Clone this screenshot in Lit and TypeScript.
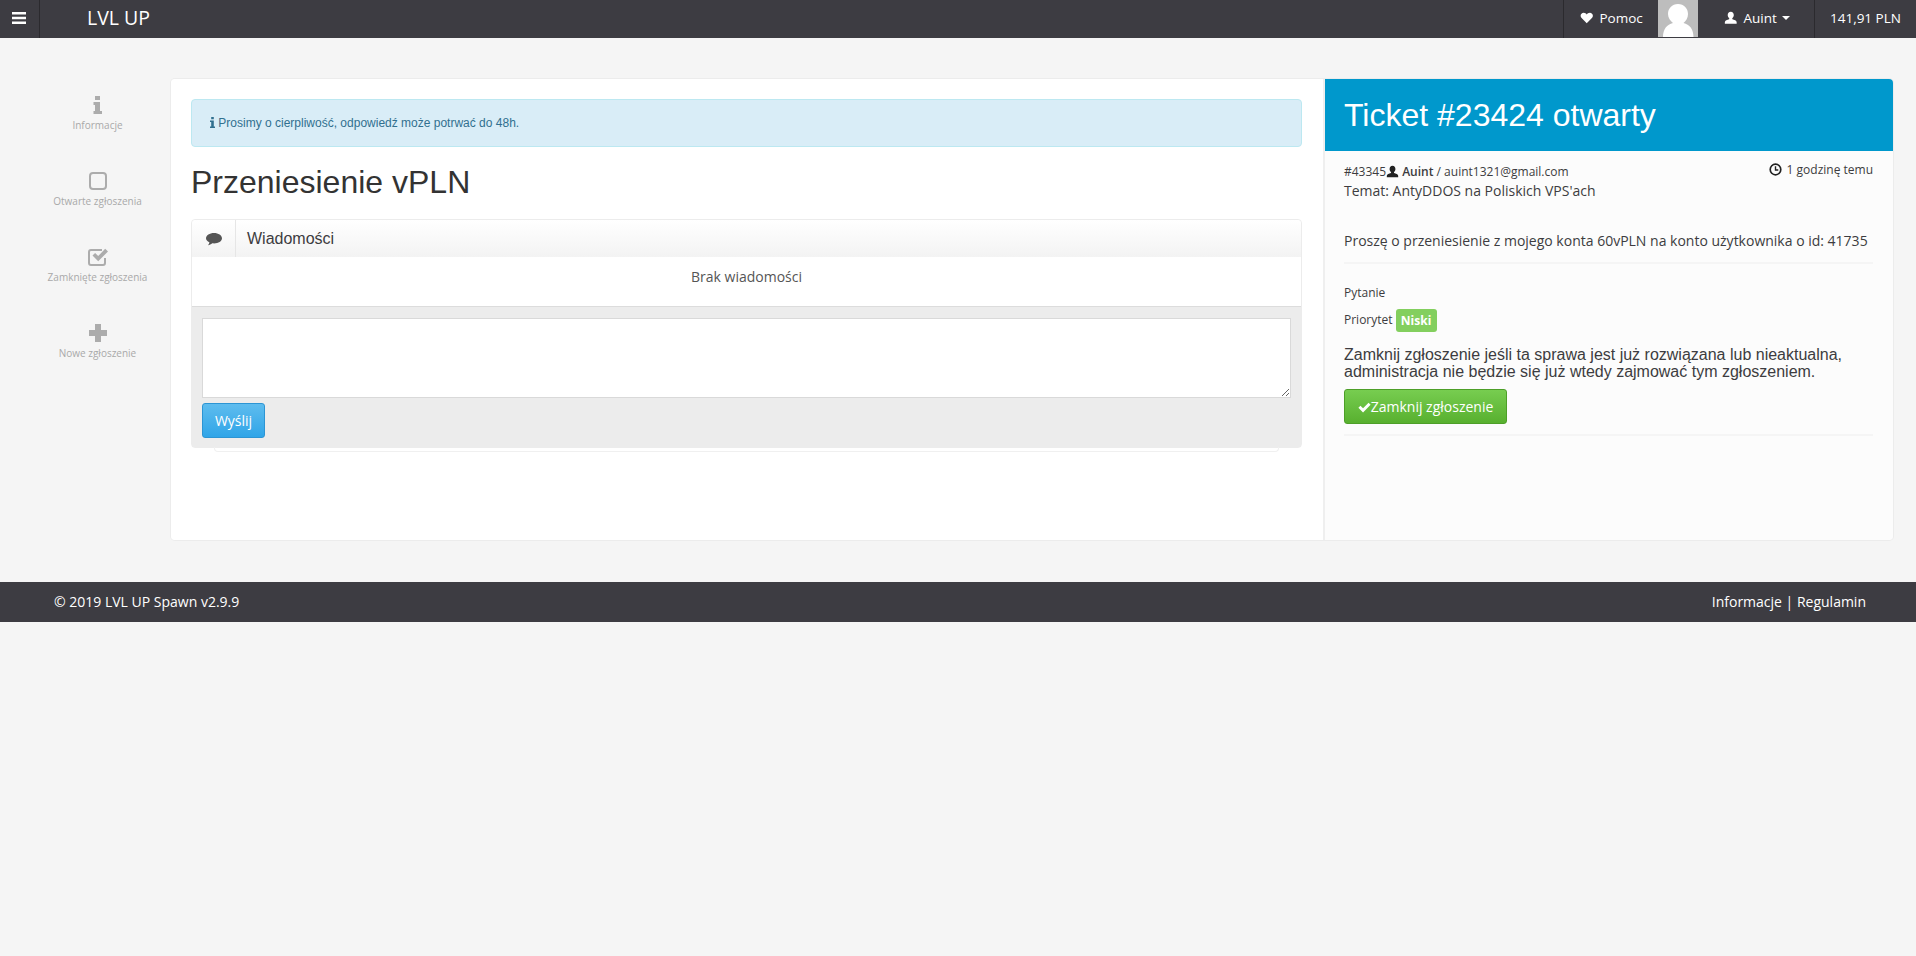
import { LitElement, html, css } from "lit";
import { customElement } from "lit/decorators.js";

const user = html`<svg viewBox="0 0 16 16" class="i"><path fill="currentColor" d="M8 1c-2.300 0-3.600 1.700-3.600 3.800 0 1.500.7 3 1.700 3.800.3.300.3.900-.1 1.200C4 10.500 1 11 1 13.200V15h14v-1.800c0-2.200-3-2.700-5-3.400-.4-.3-.4-.9-.1-1.200 1-.8 1.700-2.300 1.700-3.800C11.600 2.700 10.300 1 8 1z"/></svg>`;
const heart = html`<svg viewBox="0 0 16 16" class="i"><path fill="currentColor" d="M8 14.500 1.900 8.400C-.6 5.600 1.300 2 4.400 2 6 2 7.300 3 8 4.100 8.700 3 10 2 11.600 2c3.100 0 5 3.600 2.500 6.400z"/></svg>`;
const check = html`<svg viewBox="0 0 16 16" class="i"><path fill="currentColor" d="M.5 8.300 3 5.800l3.200 3.200 6.800-6.800L15.500 4.700 6.200 14z"/></svg>`;

@customElement("app-root")
export class AppRoot extends LitElement {
  static styles = css`
    :host { display: block; min-height: 956px; background: #f5f5f5; font-family: "Open Sans", sans-serif; color: #3d3c40; font-size: 13px; }
    * { box-sizing: border-box; }
    .i { width: 1em; height: 1em; display: inline-block; vertical-align: -0.12em; }
    .nav { height: 38px; background: #3d3c42; display: flex; color: #fff; }
    .burger { width: 40px; height: 38px; border-right: 1px solid #2b2a2e; display: flex; align-items: center; justify-content: center; padding-bottom: 3px; padding-right: 1px; }
    .burger svg { width: 14px; height: 12px; }
    .brand { margin-left: 47px; font-size: 19.500px; line-height: 36px; color: #fff; }
    .spacer { flex: 1; }
    .navitem { height: 38px; display: flex; align-items: center; font-size: 13.500px; gap: 6px; padding-bottom: 3px; }
    .help { width: 95px; border-left: 1px solid #2b2a2e; padding-left: 16px; }
    .avatar { width: 40px; height: 37px; background: #bdbdbd; display: block; }
    .account { width: 117px; border-right: 1px solid #2b2a2e; padding-left: 26px; }
    .caret { width: 0; height: 0; border-left: 4px solid transparent; border-right: 4px solid transparent; border-top: 4px solid #fff; margin-left: -1px; }
    .money { width: 101px; padding-left: 15px; font-size: 13.500px; }

    .main { display: flex; padding: 41px 23px 42px 0; }
    .side { width: 171px; flex: none; display: flex; flex-direction: column; padding: 17px 0 0 24px; }
    .side a { height: 76px; display: flex; flex-direction: column; align-items: center; color: #a9a9a9; font-size: 10px; }
    .side svg { width: 22px; height: 18px; margin-bottom: 4px; color: #acacac; }
    .side span { line-height: 14px; }

    .panel { flex: 1; display: flex; height: 461px; border-radius: 4px; box-shadow: 0 0 0 1px #ececec; }
    .left { width: 1154px; background: #fff; border-right: 2px solid #efefef; padding: 20px 21px 0 20px; border-radius: 4px 0 0 4px; }
    .alert { height: 48px; background: #d9edf7; border: 1px solid #bce8f1; border-radius: 4px; color: #31708f; font: 12px/46px "Liberation Sans", sans-serif; padding-left: 18px; }
    .alert svg { width: 5px; height: 11px; vertical-align: -1px; }
    h1 { margin: 15px 0 17px; font: 500 32px/40px "Liberation Sans", sans-serif; color: #333; }
    .widget { border: 1px solid #ececec; border-radius: 4px; position: relative; }
    .widget::after { content: ""; position: absolute; left: 22px; right: 22px; bottom: -5px; height: 4px; border: 1px solid #f0f0f0; border-top: 0; border-radius: 0 0 4px 4px; }
    .whead { height: 37px; display: flex; background: linear-gradient(#fff, #f3f3f3); border-radius: 4px 4px 0 0; }
    .wicon { width: 44px; border-right: 1px solid #e6e6e6; display: flex; align-items: center; justify-content: center; }
    .wicon svg { width: 16px; height: 14px; color: #555; }
    .wtitle { padding-left: 11px; font: 16px/37px "Liberation Sans", sans-serif; color: #3d3c40; }
    .empty { height: 50px; background: #fff; border-bottom: 1px solid #dcdcdc; text-align: center; line-height: 40px; font-size: 14px; color: #555; }
    .reply { background: #ececec; padding: 11px 10px 10px; height: 140px; }
    textarea { display: block; width: 100%; height: 80px; border: 1px solid #d9d9d9; background: #fff; margin: 0 0 5px; }
    .send { display: block; height: 35px; width: 63px; background: linear-gradient(#5ebcee, #30a5e8); border: 1px solid #2c95d4; border-radius: 3px; color: #fff; font: 14px "Open Sans", sans-serif; padding: 0; }

    .right { flex: 1; background: #fcfcfc; border-radius: 0 4px 4px 0; overflow: hidden; }
    .rhead { height: 72px; background: #0098cc; color: #fff; padding-left: 19px; font: 32px/72px "Liberation Sans", sans-serif; }
    .rbody { padding: 11px 20px 11px 19px; }
    .meta { display: flex; justify-content: space-between; font-size: 12px; line-height: 20px; height: 20px; }
    .meta svg { width: 13px; height: 13px; color: #222; vertical-align: -2px; }
    .strong { font-weight: 600; }
    .time { margin-top: -2px; }
    .time svg { margin-right: 5px; }
    .subject { font-size: 14px; line-height: 18px; }
    .msg { margin-top: 31px; font-size: 14px; line-height: 20px; padding-bottom: 11px; border-bottom: 2px solid #f5f5f5; }
    .kind { margin-top: 20px; font-size: 12px; line-height: 18px; }
    .prio { margin-top: 6px; font-size: 12px; line-height: 24px; display: flex; align-items: center; gap: 3px; }
    .badge { background: #83cf5e; color: #fff; font-weight: 700; font-size: 12px; border-radius: 3px; height: 23px; width: 41px; text-align: center; line-height: 23px; }
    .notice { margin-top: 15px; font: 16px/16.500px "Liberation Sans", sans-serif; }
    .close { display: block; margin-top: 9px; height: 35px; width: 163px; background: linear-gradient(#77cd50, #58b02f); border: 1px solid #4d9f28; border-radius: 3px; color: #fff; font: 14px "Open Sans", sans-serif; padding: 0; }
    .close svg { width: 13px; height: 13px; vertical-align: -2px; }
    .rule { height: 2px; background: #f5f5f5; margin-top: 10px; }

    .foot { height: 40px; background: #3d3c42; color: #fff; display: flex; justify-content: space-between; align-items: center; padding: 0 50px 2px 54px; font-size: 14px; }
  `;

  render() {
    return html`
      <div class="nav">
        <div class="burger"><svg viewBox="0 0 14 12"><path fill="#fff" d="M0 0h14v2.600H0zM0 4.700h14v2.600H0zM0 9.400h14V12H0z"/></svg></div>
        <div class="brand">LVL UP</div>
        <div class="spacer"></div>
        <div class="navitem help">${heart}<span>Pomoc</span></div>
        <svg class="avatar" viewBox="0 0 40 37"><path fill="#fff" d="M20 4c6 0 10 4.500 10 10 0 4-2 7-4.500 9 6 1.500 10 6 10 14H5c0-8 4-12.500 10-14-2.500-2-5-5-5-9C10 8.500 14 4 20 4z"/></svg>
        <div class="navitem account">${user}<span>Auint</span><i class="caret"></i></div>
        <div class="navitem money">141,91 PLN</div>
      </div>
      <div class="main">
        <nav class="side">
          <a><svg viewBox="0 0 22 18"><path fill="currentColor" d="M8 0h5v4H8zM6.500 6h6.500v9h2v3H6.500v-3H8v-6H6.500z"/></svg><span>Informacje</span></a>
          <a><svg viewBox="0 0 22 18"><rect x="3" y="1" width="16" height="16" rx="3" fill="none" stroke="currentColor" stroke-width="2"/></svg><span>Otwarte zgłoszenia</span></a>
          <a><svg viewBox="0 0 22 18"><path fill="none" stroke="currentColor" stroke-width="2" d="M18 10v5a2 2 0 0 1-2 2H4a2 2 0 0 1-2-2V4a2 2 0 0 1 2-2h11"/><path fill="currentColor" d="m5.500 7.500 2.600-2.600 3.100 3.100L18.200.8 21 3.500l-9.800 9.800z"/></svg><span>Zamknięte zgłoszenia</span></a>
          <a><svg viewBox="0 0 22 18"><path fill="currentColor" d="M8 0h6v6h6v6h-6v6H8v-6H2V6h6z"/></svg><span>Nowe zgłoszenie</span></a>
        </nav>
        <div class="panel">
          <div class="left">
            <div class="alert"><svg viewBox="0 0 5 11"><path fill="currentColor" d="M1.200 0h2.600v2.200H1.200zM0 3.500h3.800v6H5V11H0V9.500h1.200V5H0z"/></svg> Prosimy o cierpliwość, odpowiedź może potrwać do 48h.</div>
            <h1>Przeniesienie vPLN</h1>
            <div class="widget">
              <div class="whead">
                <div class="wicon"><svg viewBox="0 0 16 14"><path fill="currentColor" d="M8 1c4.400 0 8 2.300 8 5.200s-3.600 5.200-8 5.200c-.6 0-1.200 0-1.700-.1C5 12.500 3.500 13 2 13.200c.7-.7 1.300-1.700 1.400-2.900C1.300 9.400 0 7.900 0 6.200 0 3.300 3.600 1 8 1z"/></svg></div>
                <div class="wtitle">Wiadomości</div>
              </div>
              <div class="empty">Brak wiadomości</div>
              <div class="reply">
                <textarea></textarea>
                <button class="send">Wyślij</button>
              </div>
            </div>
          </div>
          <div class="right">
            <div class="rhead">Ticket #23424 otwarty</div>
            <div class="rbody">
              <div class="meta">
                <div>#43345${user} <span class="strong">Auint</span> / auint1321@gmail.com</div>
                <div class="time"><svg viewBox="0 0 14 14"><circle cx="7" cy="7" r="5.700" fill="none" stroke="currentColor" stroke-width="1.800"/><path fill="none" stroke="currentColor" stroke-width="1.500" d="M7 3.500V7.500H10"/></svg>1 godzinę temu</div>
              </div>
              <div class="subject">Temat: AntyDDOS na Poliskich VPS'ach</div>
              <div class="msg">Proszę o przeniesienie z mojego konta 60vPLN na konto użytkownika o id: 41735</div>
              <div class="kind">Pytanie</div>
              <div class="prio">Priorytet <span class="badge">Niski</span></div>
              <div class="notice">Zamknij zgłoszenie jeśli ta sprawa jest już rozwiązana lub nieaktualna, administracja nie będzie się już wtedy zajmować tym zgłoszeniem.</div>
              <button class="close">${check}Zamknij zgłoszenie</button>
              <div class="rule"></div>
            </div>
          </div>
        </div>
      </div>
      <div class="foot"><span>© 2019 LVL UP Spawn v2.9.9</span><span>Informacje | Regulamin</span></div>
    `;
  }
}
